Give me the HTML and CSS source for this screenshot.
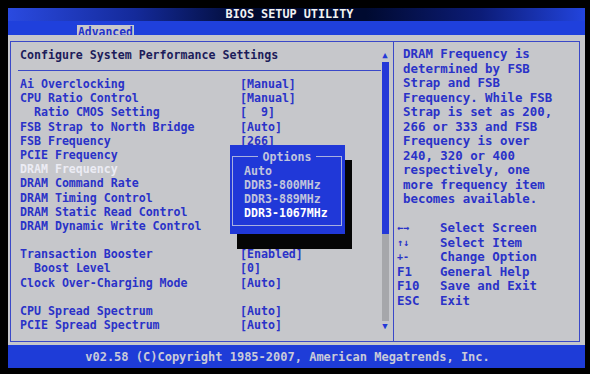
FILE: index.html
```html
<!DOCTYPE html>
<html lang="en">
<head>
    <meta charset="UTF-8">
    <title>BIOS Setup Utility</title>
    <link rel="stylesheet" href="styles.css">
</head>
<body>
    <div class="screen">
        <div class="titlebar">BIOS SETUP UTILITY</div>
        <div class="tabs"><span class="tab">Advanced</span></div>

        <div class="main">
            <div class="frame">
                <section class="settings">
                    <div class="settings-body">
                        <h1>Configure System Performance Settings</h1>
                        <div class="rule"></div>
                        <ul class="items">
                            <li><span>Ai Overclocking</span><span>[Manual]</span></li>
                            <li><span>CPU Ratio Control</span><span>[Manual]</span></li>
                            <li><span class="sub">Ratio CMOS Setting</span><span>[&nbsp;&nbsp;9]</span></li>
                            <li><span>FSB Strap to North Bridge</span><span>[Auto]</span></li>
                            <li><span>FSB Frequency</span><span>[266]</span></li>
                            <li><span>PCIE Frequency</span><span></span></li>
                            <li class="selected"><span>DRAM Frequency</span><span></span></li>
                            <li><span>DRAM Command Rate</span><span></span></li>
                            <li><span>DRAM Timing Control</span><span></span></li>
                            <li><span>DRAM Static Read Control</span><span></span></li>
                            <li><span>DRAM Dynamic Write Control</span><span></span></li>
                            <li class="blank"></li>
                            <li><span>Transaction Booster</span><span>[Enabled]</span></li>
                            <li><span class="sub">Boost Level</span><span>[0]</span></li>
                            <li><span>Clock Over-Charging Mode</span><span>[Auto]</span></li>
                            <li class="blank"></li>
                            <li><span>CPU Spread Spectrum</span><span>[Auto]</span></li>
                            <li><span>PCIE Spread Spectrum</span><span>[Auto]</span></li>
                        </ul>
                    </div>

                    <div class="scroll">
                        <span class="arrow">&#9650;</span>
                        <div class="thumb"></div>
                        <div class="track"></div>
                        <span class="arrow">&#9660;</span>
                    </div>

                    <div class="options">
                        <div class="options-box">
                            <div class="options-title"><span>Options</span></div>
                            <ul>
                                <li>Auto</li>
                                <li>DDR3-800MHz</li>
                                <li>DDR3-889MHz</li>
                                <li class="current">DDR3-1067MHz</li>
                            </ul>
                        </div>
                    </div>
                </section>

                <aside class="help">
                    <p>DRAM Frequency is<br>determined by FSB<br>Strap and FSB<br>Frequency. While FSB<br>Strap is set as 200,<br>266 or 333 and FSB<br>Frequency is over<br>240, 320 or 400<br>respectively, one<br>more frequency item<br>becomes available.</p>
                    <dl class="keys">
                        <dt class="glyph">&larr;&rarr;</dt><dd>Select Screen</dd>
                        <dt class="glyph">&uarr;&darr;</dt><dd>Select Item</dd>
                        <dt class="glyph">+-</dt><dd>Change Option</dd>
                        <dt>F1</dt><dd>General Help</dd>
                        <dt>F10</dt><dd>Save and Exit</dd>
                        <dt>ESC</dt><dd>Exit</dd>
                    </dl>
                </aside>
            </div>
        </div>

        <div class="footer">v02.58 (C)Copyright 1985-2007, American Megatrends, Inc.</div>
    </div>
</body>
</html>
```

FILE: styles.css
```css
body {
    margin: 0;
    background-color: #000;
    font-family: "DejaVu Sans Mono", "Liberation Mono", monospace;
    font-weight: bold;
}

.screen {
    width: 590px;
    height: 374px;
    box-sizing: border-box;
    padding: 8px 5px 6px 8px;
    display: flex;
    flex-direction: column;
}

.titlebar {
    height: 13px;
    padding-right: 14px;
    background: linear-gradient(90deg, #2a4ae0 0%, #142a9a 22%, #000a30 42%, #000a30 62%, #0c1c78 82%, #2244dd 100%);
    color: #f2f2f2;
    font-size: 11.8px;
    line-height: 13px;
    text-align: center;
}

.tabs {
    height: 14px;
    padding-left: 69px;
    background-color: #1f40dc;
}

.tab {
    display: inline-block;
    height: 14px;
    padding: 0 1px;
    background-color: #c8c8cc;
    color: #2233cc;
    font-size: 11.4px;
    line-height: 14px;
}

.main {
    flex: 1;
    padding: 6px 5px 3px 2px;
    background-color: #c6c7cb;
}

.frame {
    height: 100%;
    box-sizing: border-box;
    border: 1px solid #3a48c8;
    display: grid;
    grid-template-columns: 382px 1fr;
}

.settings {
    position: relative;
    display: flex;
}

.settings-body {
    flex: 1;
    padding: 6px 0 0 9px;
}

h1 {
    margin: 0;
    color: #1c1c5a;
    font-size: 11.6px;
    line-height: 14px;
}

.rule {
    height: 1px;
    margin: 8px 0 6px -2px;
    background-color: #3a48c8;
}

.items {
    list-style: none;
    margin: 0;
    padding: 0;
    color: #2a32c8;
    font-size: 11.6px;
    line-height: 14.2px;
}

.items li {
    display: grid;
    grid-template-columns: 220px auto;
    height: 14.2px;
}

.items .sub {
    padding-left: 14px;
}

.items .selected {
    color: #ececf4;
}

.scroll {
    width: 8px;
    margin: 8px 4px 9px 0;
    display: flex;
    flex-direction: column;
    align-items: center;
    color: #2438d8;
}

.arrow {
    height: 11px;
    font-size: 9px;
    line-height: 11px;
}

.thumb {
    width: 7px;
    height: 172px;
    margin-top: 1px;
    background-color: #2438d8;
}

.track {
    width: 7px;
    flex: 1;
    background-color: #a6a7ab;
}

.options {
    position: absolute;
    left: 219px;
    top: 103px;
    width: 115px;
    box-sizing: border-box;
    padding: 11px 3px 8px 2px;
    background-color: #2038d8;
    box-shadow: 7px 15px 0 #050505;
    color: #c0c4dc;
    font-size: 11.6px;
    line-height: 14px;
}

.options-box {
    border: 1px solid #a8b0e0;
    padding: 0 0 5px 11px;
}

.options-title {
    margin: -7px 0 0 -11px;
    text-align: center;
}

.options-title span {
    padding: 0 5px;
    background-color: #2038d8;
}

.options ul {
    list-style: none;
    margin: 0;
    padding: 0;
}

.options .current {
    color: #ffffff;
}

.help {
    border-left: 1px solid #3a48c8;
    padding: 5px 4px 0 9px;
    color: #2a32c8;
    font-size: 12.4px;
    line-height: 14.5px;
}

.help p {
    margin: 0 0 14.5px;
}

.keys {
    display: grid;
    grid-template-columns: 43px 1fr;
    margin: 0 0 0 -6px;
}

.keys dt,
.keys dd {
    margin: 0;
    height: 14.5px;
}

.keys .glyph {
    font-size: 10px;
}

.footer {
    height: 23px;
    padding-right: 18px;
    background-color: #1e3cd8;
    color: #c8cad8;
    font-size: 12px;
    line-height: 25px;
    text-align: center;
}
```
